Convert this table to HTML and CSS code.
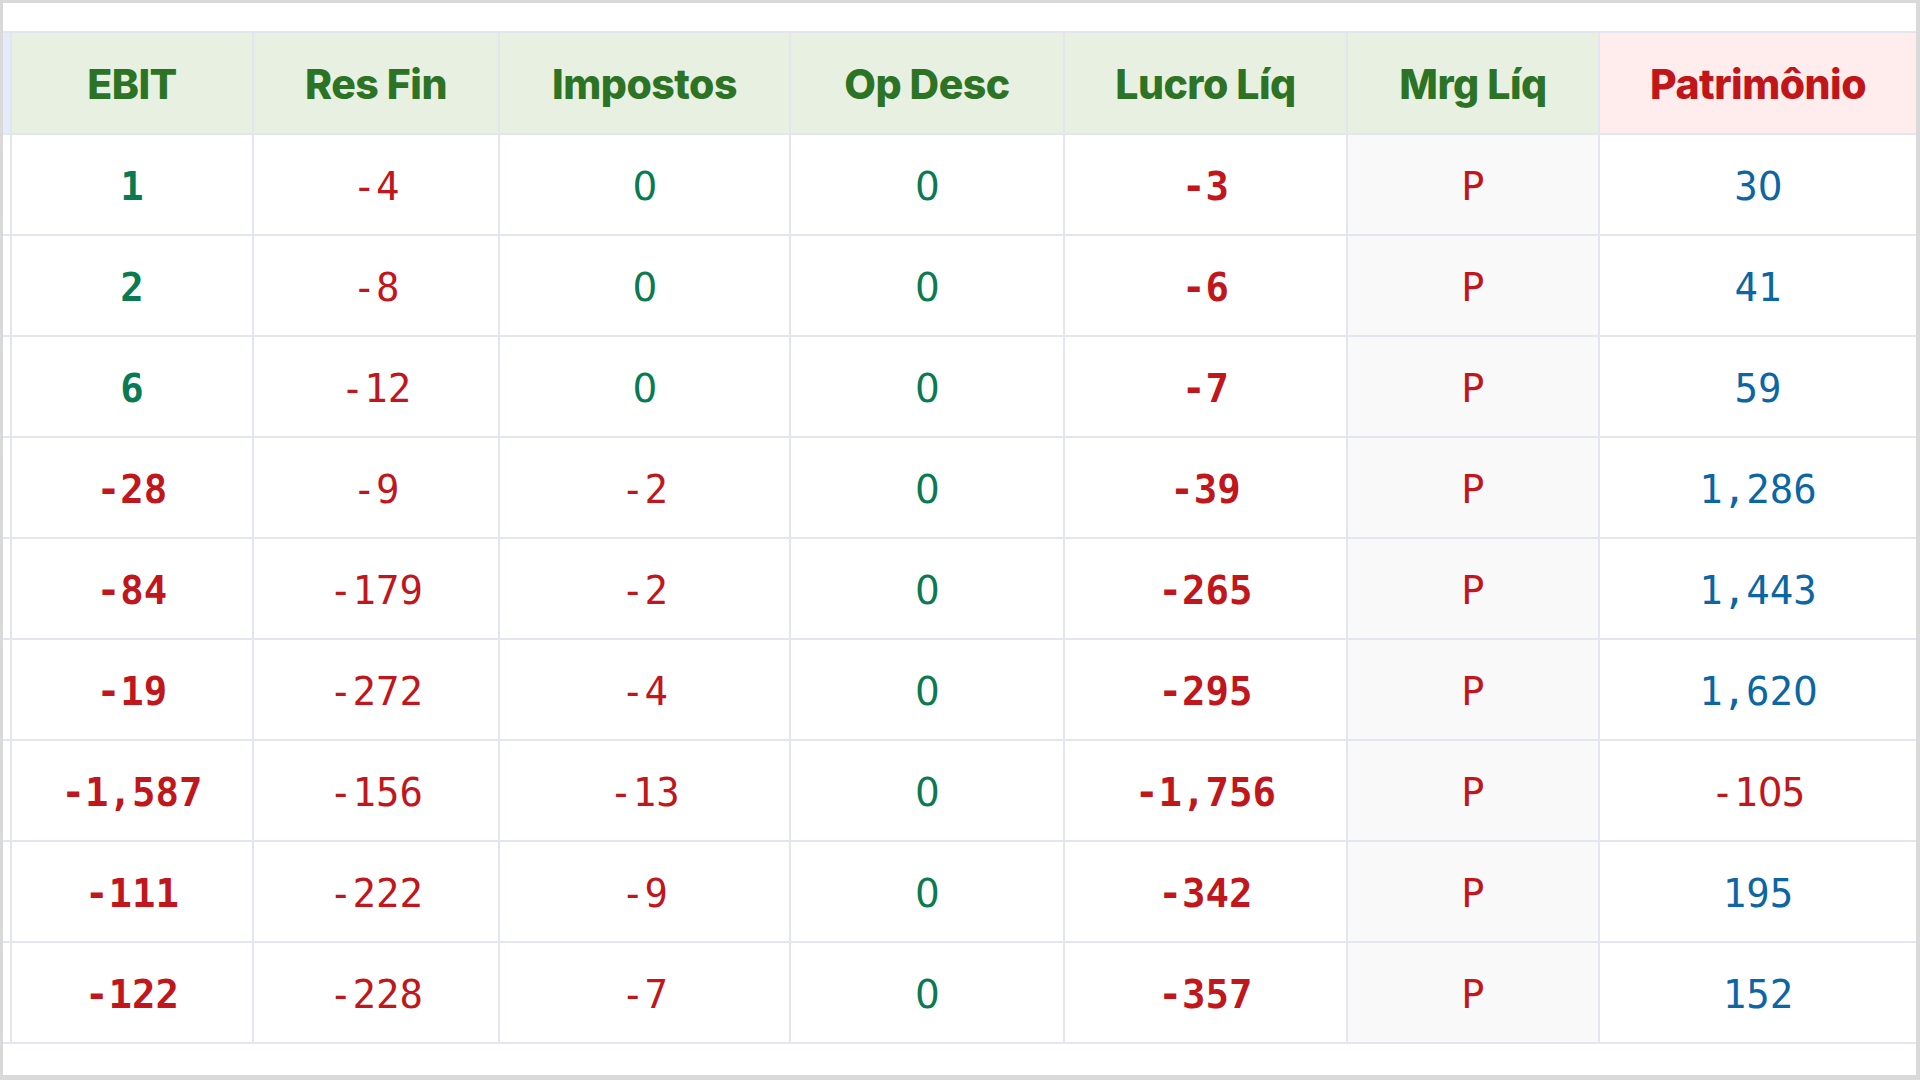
FILE: index.html
```html
<!DOCTYPE html>
<html lang="pt-BR">
<head>
<meta charset="utf-8">
<title>Resultados</title>
<link rel="stylesheet" href="styles.css">
</head>
<body>
<div class="panel">
  <table class="grid">
    <thead>
      <tr>
        <th class="c-prev"></th>
        <th class="c-ebit">EBIT</th>
        <th class="c-res">Res Fin</th>
        <th class="c-imp">Impostos</th>
        <th class="c-op">Op Desc</th>
        <th class="c-luc">Lucro Líq</th>
        <th class="c-mrg">Mrg Líq</th>
        <th class="c-pat alt">Patrimônio</th>
      </tr>
    </thead>
    <tbody>
      <tr><td></td><td class="b pos">1</td><td class="neg">-4</td><td class="pos"><span class="z">0</span></td><td class="pos"><span class="z">0</span></td><td class="b neg">-3</td><td class="mrg neg">P</td><td class="blue">3<span class="z">0</span></td></tr>
      <tr><td></td><td class="b pos">2</td><td class="neg">-8</td><td class="pos"><span class="z">0</span></td><td class="pos"><span class="z">0</span></td><td class="b neg">-6</td><td class="mrg neg">P</td><td class="blue">41</td></tr>
      <tr><td></td><td class="b pos">6</td><td class="neg">-12</td><td class="pos"><span class="z">0</span></td><td class="pos"><span class="z">0</span></td><td class="b neg">-7</td><td class="mrg neg">P</td><td class="blue">59</td></tr>
      <tr><td></td><td class="b neg">-28</td><td class="neg">-9</td><td class="neg">-2</td><td class="pos"><span class="z">0</span></td><td class="b neg">-39</td><td class="mrg neg">P</td><td class="blue">1,286</td></tr>
      <tr><td></td><td class="b neg">-84</td><td class="neg">-179</td><td class="neg">-2</td><td class="pos"><span class="z">0</span></td><td class="b neg">-265</td><td class="mrg neg">P</td><td class="blue">1,443</td></tr>
      <tr><td></td><td class="b neg">-19</td><td class="neg">-272</td><td class="neg">-4</td><td class="pos"><span class="z">0</span></td><td class="b neg">-295</td><td class="mrg neg">P</td><td class="blue">1,62<span class="z">0</span></td></tr>
      <tr><td></td><td class="b neg">-1,587</td><td class="neg">-156</td><td class="neg">-13</td><td class="pos"><span class="z">0</span></td><td class="b neg">-1,756</td><td class="mrg neg">P</td><td class="neg">-1<span class="z">0</span>5</td></tr>
      <tr><td></td><td class="b neg">-111</td><td class="neg">-222</td><td class="neg">-9</td><td class="pos"><span class="z">0</span></td><td class="b neg">-342</td><td class="mrg neg">P</td><td class="blue">195</td></tr>
      <tr><td></td><td class="b neg">-122</td><td class="neg">-228</td><td class="neg">-7</td><td class="pos"><span class="z">0</span></td><td class="b neg">-357</td><td class="mrg neg">P</td><td class="blue">152</td></tr>
    </tbody>
  </table>
</div>
</body>
</html>
```
FILE: styles.css
```css
html, body {
  margin: 0;
  padding: 0;
}
body {
  background: #d9d9d9;
  padding: 3px 4px 5px 3px;
  width: 1920px;
  height: 1080px;
  box-sizing: border-box;
}
.panel {
  background: #ffffff;
  height: 1072px;
  box-sizing: border-box;
  padding-top: 28px;
  overflow: hidden;
}
.grid {
  width: 1913px;
  table-layout: fixed;
  border-collapse: separate;
  border-spacing: 0;
}
.grid th,
.grid td {
  box-sizing: border-box;
  padding: 0;
  text-align: center;
  vertical-align: middle;
  border-right: 2px solid #e3e6ee;
  border-bottom: 2px solid #e3e6ee;
  white-space: nowrap;
  overflow: hidden;
}
.grid th {
  height: 104px;
  padding-top: 2px;
  border-top: 2px solid #e3e6ee;
  background: #e8f0e1;
  color: #2d7325;
  font-family: Inter, "Liberation Sans", sans-serif;
  font-weight: 800;
  font-size: 41px;
  letter-spacing: -0.5px;
}
.grid th.c-prev {
  background: #e4ebfb;
}
.grid th.alt {
  background: #ffeded;
  color: #c0161a;
}
.c-prev { width: 9px; }
.c-ebit { width: 242px; }
.c-res { width: 246px; }
.c-imp { width: 291px; }
.c-op { width: 274px; }
.c-luc { width: 283px; }
.c-mrg { width: 252px; }
.c-pat { width: 316px; }
.grid th.c-pat,
.grid tr td:last-child {
  border-right: 0;
}
.grid td {
  height: 101px;
  padding-top: 3px;
  font-family: "DejaVu Sans Mono", "Liberation Mono", monospace;
  font-size: 39px;
  font-weight: 400;
}
.grid td .z {
  font-family: "DejaVu Sans", "Liberation Sans", sans-serif;
  letter-spacing: -1px;
}
.grid td.b {
  font-weight: 700;
}
.grid td.mrg {
  background: #f9f9f9;
}
.pos { color: #0a7a52; }
.neg { color: #c0161c; }
.blue { color: #0b66a3; }
```
